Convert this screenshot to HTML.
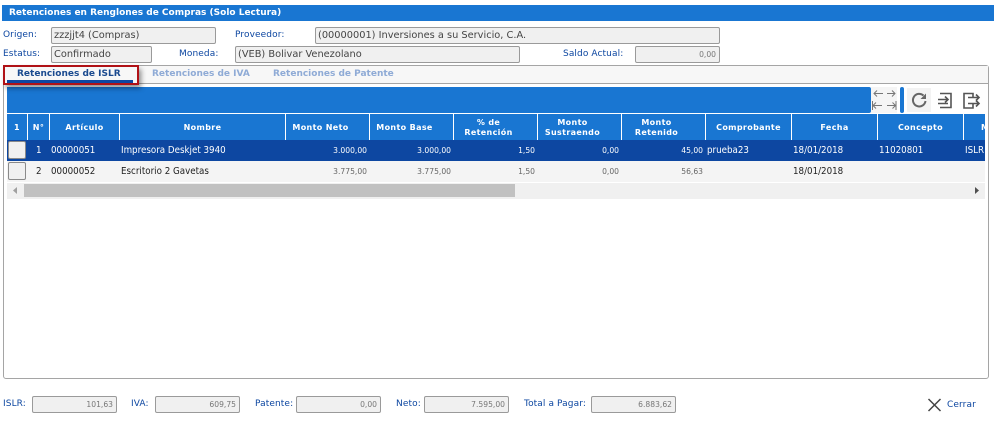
<!DOCTYPE html>
<html><head><meta charset="utf-8"><style>
html,body{margin:0;padding:0;width:996px;height:440px;background:#fff;overflow:hidden;font-family:"DejaVu Sans",Verdana,sans-serif}
div,span{position:absolute;box-sizing:border-box;white-space:nowrap}
.l{font-size:9px;color:#0d47a1;line-height:14px;letter-spacing:.1px}
.i{background:#f0f0f0;border:1px solid #9a9a9a;border-radius:2px;font-size:9.8px;color:#444;line-height:16px;padding-left:2px;height:17px}
.n{text-align:right;padding:0 3px 0 0;font-size:7.6px;color:#777}
.h{top:114px;height:26px;background:#1976d2;color:#fff;font-size:8px;font-weight:bold;text-align:center;display:flex;align-items:center;justify-content:center;line-height:10px;letter-spacing:.35px;white-space:normal;padding-top:2px}
.m{padding-right:14px}
.c{font-size:9.7px;line-height:21px;height:21px;font-family:"DejaVu Sans Condensed","DejaVu Sans",sans-serif;font-stretch:condensed}
.r{font-size:7.6px;text-align:right;line-height:21px;height:21px}
.w{color:#fff}.d{color:#222}.g{color:#666}
.t{font-size:9px;font-weight:bold;top:68px;line-height:13px;color:#8fabd6}
</style></head><body>
<div style="left:2px;top:5px;width:992px;height:16px;background:#1976d2;color:#fff;font-size:9px;font-weight:bold;line-height:17px;padding-left:7px">Retenciones en Renglones de Compras (Solo Lectura)</div>

<div class="l" style="left:3px;top:28px">Origen:</div>
<div class="i" style="left:51px;top:27px;width:165px">zzzjjt4 (Compras)</div>
<div class="l" style="left:235px;top:28px">Proveedor:</div>
<div class="i" style="left:315px;top:27px;width:405px">(00000001) Inversiones a su Servicio, C.A.</div>
<div class="l" style="left:3px;top:47px">Estatus:</div>
<div class="i" style="left:51px;top:46px;width:101px">Confirmado</div>
<div class="l" style="left:179px;top:47px">Moneda:</div>
<div class="i" style="left:235px;top:46px;width:285px">(VEB) Bolivar Venezolano</div>
<div class="l" style="left:563px;top:47px">Saldo Actual:</div>
<div class="i n" style="left:635px;top:46px;width:85px">0,00</div>

<div style="left:3px;top:65px;width:986px;height:314px;border:1px solid #a5a5a5;border-radius:3px"></div>
<div style="left:4px;top:66px;width:984px;height:18px;background:#f7f7f7;border-bottom:1px solid #a5a5a5"></div>

<div style="left:7px;top:87px;width:864px;height:26px;background:#1976d2;border-radius:0 2px 2px 0"></div>
<div style="left:871px;top:87px;width:26px;height:26px;background:#f5f5f5"></div>
<div style="left:900px;top:87px;width:4px;height:26px;background:#1976d2;border-radius:2px"></div>
<div style="left:907px;top:88px;width:24px;height:24px;background:#f3f3f3"></div>

<div style="left:4px;top:66px;width:135px;height:19px;box-shadow:2px 3px 5px rgba(0,0,0,.45)"></div>
<div style="left:3px;top:65px;width:136px;height:20px;border:2px solid #b01116;background:#f7f7f7"></div>
<div style="left:7px;top:80px;width:126px;height:3px;background:#0d47a1"></div>
<div class="t" style="left:17px;color:#1a4a8f">Retenciones de ISLR</div>
<div class="t" style="left:152px">Retenciones de IVA</div>
<div class="t" style="left:273px">Retenciones de Patente</div>

<svg style="position:absolute;left:870px;top:86px" width="126" height="28" viewBox="0 0 126 28" fill="none" stroke="#555" stroke-width="1.3">
<path d="M13 7.500H4M7 4.500L4 7.500L7 10.500M17 7.500H25M22 4.500L25 7.500L22 10.500" stroke="#777" stroke-width="1"/>
<path d="M2.500 15V24M3 19.500H12M6 16.500L3 19.500L6 22.500M26 15V24M25.500 19.500H17M22.500 16.500L25.500 19.500L22.500 22.500" stroke="#777" stroke-width="1"/>
<path d="M53.500 9.500A6.300 6.300 0 1 0 55.500 15" stroke="#666" stroke-width="2"/><path d="M56 7.500V13H50.500Z" fill="#666" stroke="none"/>
<path d="M70 7.500H81V21.500H70M81 7.500V21.500M68 13.500H78M75 10.500L78 13.500L75 16.500M68 17.500H78" stroke-width="1.600"/>
<path d="M103 11V7.500H94V22H103V18M98 11.500H109M98 17.500H109M106 8.500L109 11.500L106 14.500M106 14.500L109 17.500L106 20.500" stroke-width="1.600"/>
</svg>

<div class="h" style="left:7px;width:20px">1</div>
<div class="h" style="left:28px;width:21px">N°</div>
<div class="h" style="left:50px;width:69px">Artículo</div>
<div class="h" style="left:120px;width:165px">Nombre</div>
<div class="h m" style="left:286px;width:83px">Monto Neto</div>
<div class="h m" style="left:370px;width:83px">Monto Base</div>
<div class="h m" style="left:454px;width:83px">% de<br>Retención</div>
<div class="h m" style="left:538px;width:83px">Monto<br>Sustraendo</div>
<div class="h m" style="left:622px;width:83px">Monto<br>Retenido</div>
<div class="h" style="left:706px;width:85px">Comprobante</div>
<div class="h" style="left:792px;width:85px">Fecha</div>
<div class="h" style="left:878px;width:85px">Concepto</div>
<div class="h" style="left:964px;width:21px;overflow:hidden;justify-content:flex-start;padding-left:17px">M</div>

<div style="left:7px;top:140px;width:978px;height:21px;background:#0d47a1"></div>
<div style="left:7px;top:161px;width:978px;height:21px;background:#f4f4f4"></div>
<div style="left:8px;top:141px;width:18px;height:18px;background:#f0f0f0;border:1px solid #8a8a8a;border-radius:2px"></div>
<div style="left:8px;top:162px;width:18px;height:18px;background:#f0f0f0;border:1px solid #8a8a8a;border-radius:2px"></div>

<div class="c w" style="left:36px;top:140px">1</div>
<div class="c w" style="left:51px;top:140px">00000051</div>
<div class="c w" style="left:121px;top:140px">Impresora Deskjet 3940</div>
<div class="r w" style="left:286px;width:81px;top:140px">3.000,00</div>
<div class="r w" style="left:370px;width:81px;top:140px">3.000,00</div>
<div class="r w" style="left:454px;width:81px;top:140px">1,50</div>
<div class="r w" style="left:538px;width:81px;top:140px">0,00</div>
<div class="r w" style="left:622px;width:81px;top:140px">45,00</div>
<div class="c w" style="left:707px;top:140px">prueba23</div>
<div class="c w" style="left:793px;top:140px">18/01/2018</div>
<div class="c w" style="left:879px;top:140px">11020801</div>
<div class="c w" style="left:965px;top:140px;width:20px;overflow:hidden">ISLR</div>

<div class="c d" style="left:36px;top:161px">2</div>
<div class="c d" style="left:51px;top:161px">00000052</div>
<div class="c d" style="left:121px;top:161px">Escritorio 2 Gavetas</div>
<div class="r g" style="left:286px;width:81px;top:161px">3.775,00</div>
<div class="r g" style="left:370px;width:81px;top:161px">3.775,00</div>
<div class="r g" style="left:454px;width:81px;top:161px">1,50</div>
<div class="r g" style="left:538px;width:81px;top:161px">0,00</div>
<div class="r g" style="left:622px;width:81px;top:161px">56,63</div>
<div class="c d" style="left:793px;top:161px">18/01/2018</div>

<div style="left:7px;top:183px;width:978px;height:16px;background:#f0f0f0"></div>
<div style="left:24px;top:184px;width:491px;height:13px;background:#c1c1c1"></div>
<svg style="position:absolute;left:7px;top:183px" width="978" height="16"><path d="M6 7.500L10 4V11Z" fill="#a0a0a0"/><path d="M968 4L972 7.500L968 11Z" fill="#505050"/></svg>

<div class="l" style="left:3px;top:397px">ISLR:</div>
<div class="i n" style="left:32px;top:396px;width:85px">101,63</div>
<div class="l" style="left:131px;top:397px">IVA:</div>
<div class="i n" style="left:155px;top:396px;width:85px">609,75</div>
<div class="l" style="left:255px;top:397px">Patente:</div>
<div class="i n" style="left:296px;top:396px;width:85px">0,00</div>
<div class="l" style="left:396px;top:397px">Neto:</div>
<div class="i n" style="left:424px;top:396px;width:85px">7.595,00</div>
<div class="l" style="left:524px;top:397px">Total a Pagar:</div>
<div class="i n" style="left:591px;top:396px;width:85px">6.883,62</div>

<svg style="position:absolute;left:927px;top:397px" width="16" height="16"><path d="M1.500 2L13.500 14M13.500 2L1.500 14" stroke="#444" stroke-width="1.500" fill="none"/></svg>
<div class="l" style="left:947px;top:398px">Cerrar</div>
</body></html>
